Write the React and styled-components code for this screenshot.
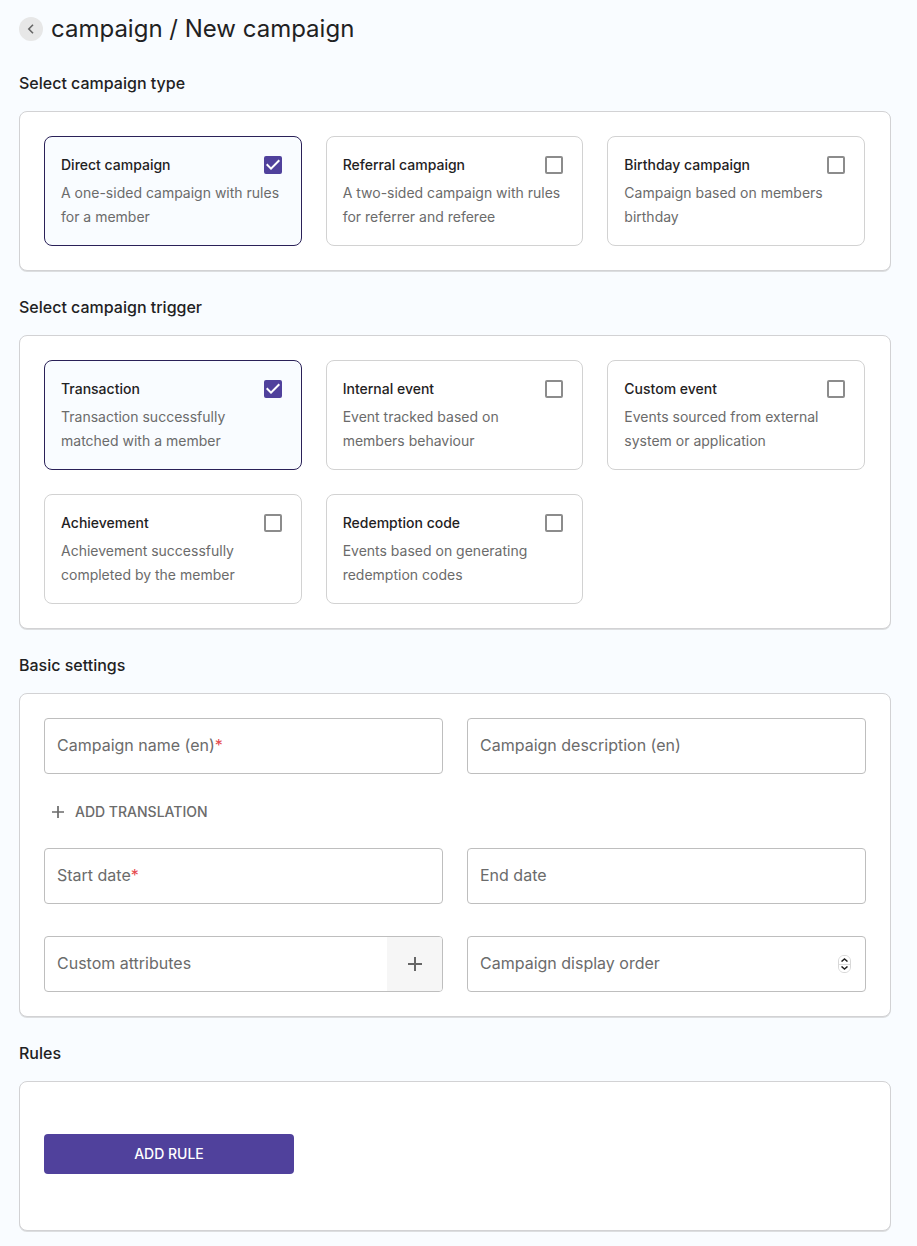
import { useState } from "react";
import styled, { createGlobalStyle } from "styled-components";

const GlobalStyle = createGlobalStyle`
  * {
    box-sizing: border-box;
  }
  body {
    margin: 0;
    background: #f9fcff;
    color: #1f2223;
    font-family: Inter, "Liberation Sans", sans-serif;
    font-size: 14px;
    line-height: 24px;
  }
  button,
  input {
    font: inherit;
    color: inherit;
  }
`;

const Page = styled.main`
  padding: 11px 26px 15px 19px;
`;

const Header = styled.header`
  display: flex;
  align-items: center;
  gap: 8px;
  height: 36px;
`;

const BackButton = styled.button`
  display: flex;
  align-items: center;
  justify-content: center;
  width: 24px;
  height: 24px;
  padding: 0;
  border: 0;
  border-radius: 50%;
  background: #e7e7e7;
  color: #666;
  cursor: pointer;
`;

const Title = styled.h1`
  margin: 0;
  font-size: 24px;
  font-weight: 400;
  line-height: 36px;
`;

const SectionTitle = styled.h2`
  margin: 24px 0 16px;
  font-size: 16px;
  font-weight: 500;
  line-height: 24px;
`;

const Panel = styled.div`
  padding: ${(props) => (props.$tall ? "52px 24px 56px" : "24px")};
  border: 1px solid #d2d2d4;
  border-radius: 8px;
  background: #fff;
  box-shadow: 0 1px 0 #dcdee0;
`;

const OptionGrid = styled.div`
  display: grid;
  grid-template-columns: repeat(3, 1fr);
  gap: 24px;
  margin-right: 1px;
`;

const OptionCard = styled.label`
  display: block;
  padding: 16px;
  border: 1px solid ${(props) => (props.$active ? "#2a2158" : "#d2d2d2")};
  border-radius: 8px;
  background: ${(props) => (props.$active ? "#f9fcff" : "#fff")};
  cursor: pointer;
`;

const OptionHead = styled.div`
  display: flex;
  align-items: center;
  justify-content: space-between;
  margin-bottom: 4px;
`;

const OptionTitle = styled.span`
  font-weight: 500;
`;

const OptionText = styled.p`
  margin: 0;
  padding-right: 4px;
  color: #6b6b6b;
`;

const CheckHolder = styled.span`
  display: grid;
  margin: 3px;

  > * {
    grid-area: 1 / 1;
  }
  svg {
    pointer-events: none;
  }
`;

const Checkbox = styled.input`
  appearance: none;
  width: 18px;
  height: 18px;
  margin: 0;
  border: 2px solid #8c8c8c;
  border-radius: 2px;
  cursor: pointer;

  &:checked {
    border-color: #50419c;
    background: #50419c;
  }
`;

const FieldRow = styled.div`
  display: grid;
  grid-template-columns: 1fr 1fr;
  gap: 32px 24px;
`;

const FieldBox = styled.div`
  display: flex;
  height: 56px;
  border: 1px solid #bebebe;
  border-radius: 4px;
  background: #fff;
  overflow: hidden;
`;

const FieldBody = styled.div`
  flex: 1;
  min-width: 0;
  display: grid;
  align-items: center;

  > * {
    grid-area: 1 / 1;
  }
`;

const FieldLabel = styled.label`
  padding: 0 0 2px 12px;
  color: #6b6b6b;
  font-size: 16px;
  pointer-events: none;
  visibility: ${(props) => (props.$hidden ? "hidden" : "visible")};
`;

const Star = styled.span`
  color: #e5484d;
`;

const FieldInput = styled.input`
  width: 100%;
  height: 100%;
  padding: 0 12px;
  border: 0;
  outline: 0;
  background: transparent;
  font-size: 16px;
  appearance: textfield;

  &::-webkit-inner-spin-button {
    appearance: none;
  }
`;

const AttributeButton = styled.button`
  display: flex;
  align-items: center;
  justify-content: center;
  width: 55px;
  padding: 0;
  border: 0;
  background: #f6f6f6;
  color: #666;
  cursor: pointer;
`;

const Stepper = styled.div`
  display: flex;
  flex-direction: column;
  align-self: center;
  width: 13px;
  height: 18px;
  margin-right: 14px;
  border: 1px solid #d8d8d8;
  border-radius: 6px;
  overflow: hidden;
`;

const StepButton = styled.button`
  flex: 1;
  display: flex;
  align-items: center;
  justify-content: center;
  padding: 0;
  border: 0;
  background: #fff;
  color: #222;

  & + & {
    border-top: 1px solid #dcdcdc;
  }
`;

const TranslationButton = styled.button`
  display: flex;
  align-items: center;
  gap: 11px;
  height: 36px;
  margin: 20px 0 18px;
  padding: 0 8px;
  border: 0;
  background: none;
  color: #6b6b6b;
  font-weight: 500;
  text-transform: uppercase;
  cursor: pointer;
`;

const RuleButton = styled.button`
  display: block;
  width: 250px;
  height: 40px;
  border: 0;
  border-radius: 4px;
  background: #50419c;
  color: #fff;
  font-weight: 500;
  text-transform: uppercase;
  cursor: pointer;
`;

const types = [
  { id: "direct", title: "Direct campaign", text: "A one-sided campaign with rules for a member" },
  { id: "referral", title: "Referral campaign", text: "A two-sided campaign with rules for referrer and referee" },
  { id: "birthday", title: "Birthday campaign", text: "Campaign based on members birthday" },
];

const triggers = [
  { id: "transaction", title: "Transaction", text: "Transaction successfully matched with a member" },
  { id: "internal", title: "Internal event", text: "Event tracked based on members behaviour" },
  { id: "custom", title: "Custom event", text: "Events sourced from external system or application" },
  { id: "achievement", title: "Achievement", text: "Achievement successfully completed by the member" },
  { id: "redemption", title: "Redemption code", text: "Events based on generating redemption codes" },
];

const PlusIcon = ({ size = 14 }) => (
  <svg width={size} height={size} viewBox="0 0 14 14" fill="currentColor" aria-hidden="true">
    <path d="M6 0h2v6h6v2H8v6H6V8H0V6h6z" />
  </svg>
);

const Options = ({ items, value, onChange }) => (
  <OptionGrid>
    {items.map((item) => (
      <OptionCard key={item.id} $active={item.id === value}>
        <OptionHead>
          <OptionTitle>{item.title}</OptionTitle>
          <CheckHolder>
            <Checkbox
              type="checkbox"
              checked={item.id === value}
              onChange={() => onChange(item.id)}
            />
            {item.id === value && (
              <svg width="18" height="18" viewBox="0 0 18 18" fill="#fff" aria-hidden="true">
                <path d="M7 14 2 9l1.4-1.4L7 11.2l7.6-7.6L16 5z" />
              </svg>
            )}
          </CheckHolder>
        </OptionHead>
        <OptionText>{item.text}</OptionText>
      </OptionCard>
    ))}
  </OptionGrid>
);

const Field = ({ name, label, required, type = "text", value, onChange, children }) => (
  <FieldBox>
    <FieldBody>
      <FieldLabel htmlFor={name} $hidden={value !== ""}>
        {label}
        {required && <Star>*</Star>}
      </FieldLabel>
      <FieldInput
        id={name}
        name={name}
        type={type}
        required={required}
        value={value}
        onChange={onChange}
      />
    </FieldBody>
    {children}
  </FieldBox>
);

const App = () => {
  const [type, setType] = useState("direct");
  const [trigger, setTrigger] = useState("transaction");
  const [formData, setFormData] = useState({
    name: "",
    description: "",
    start: "",
    end: "",
    attributes: "",
    order: "",
  });

  const handleInputChange = (e) => {
    setFormData({ ...formData, [e.target.name]: e.target.value });
  };

  const stepOrder = (step) => {
    setFormData({ ...formData, order: String(Number(formData.order) + step) });
  };

  const bind = (name) => ({
    name,
    value: formData[name],
    onChange: handleInputChange,
  });

  return (
    <>
      <GlobalStyle />
      <Page>
        <Header>
          <BackButton aria-label="Back">
            <svg width="8" height="10" viewBox="0 0 8 10" fill="none" stroke="currentColor" strokeWidth="1.6" aria-hidden="true">
              <path d="M6 .7 1.8 5 6 9.3" />
            </svg>
          </BackButton>
          <Title>campaign / New campaign</Title>
        </Header>

        <section>
          <SectionTitle>Select campaign type</SectionTitle>
          <Panel>
            <Options items={types} value={type} onChange={setType} />
          </Panel>
        </section>

        <section>
          <SectionTitle>Select campaign trigger</SectionTitle>
          <Panel>
            <Options items={triggers} value={trigger} onChange={setTrigger} />
          </Panel>
        </section>

        <section>
          <SectionTitle>Basic settings</SectionTitle>
          <Panel>
            <FieldRow>
              <Field {...bind("name")} label="Campaign name (en)" required />
              <Field {...bind("description")} label="Campaign description (en)" />
            </FieldRow>
            <TranslationButton>
              <PlusIcon size={12} />
              Add translation
            </TranslationButton>
            <FieldRow>
              <Field {...bind("start")} label="Start date" required />
              <Field {...bind("end")} label="End date" />
              <Field {...bind("attributes")} label="Custom attributes">
                <AttributeButton aria-label="Add custom attribute">
                  <PlusIcon />
                </AttributeButton>
              </Field>
              <Field {...bind("order")} label="Campaign display order" type="number">
                <Stepper>
                  <StepButton aria-label="Increase" onClick={() => stepOrder(1)}>
                    <svg width="7" height="4" viewBox="0 0 7 4" fill="none" stroke="currentColor" strokeWidth="1.5" aria-hidden="true">
                      <path d="M.5 3.5 3.5 1l3 2.5" />
                    </svg>
                  </StepButton>
                  <StepButton aria-label="Decrease" onClick={() => stepOrder(-1)}>
                    <svg width="7" height="4" viewBox="0 0 7 4" fill="none" stroke="currentColor" strokeWidth="1.5" aria-hidden="true">
                      <path d="M.5.5 3.5 3l3-2.5" />
                    </svg>
                  </StepButton>
                </Stepper>
              </Field>
            </FieldRow>
          </Panel>
        </section>

        <section>
          <SectionTitle>Rules</SectionTitle>
          <Panel $tall>
            <RuleButton>Add rule</RuleButton>
          </Panel>
        </section>
      </Page>
    </>
  );
};

export default App;
